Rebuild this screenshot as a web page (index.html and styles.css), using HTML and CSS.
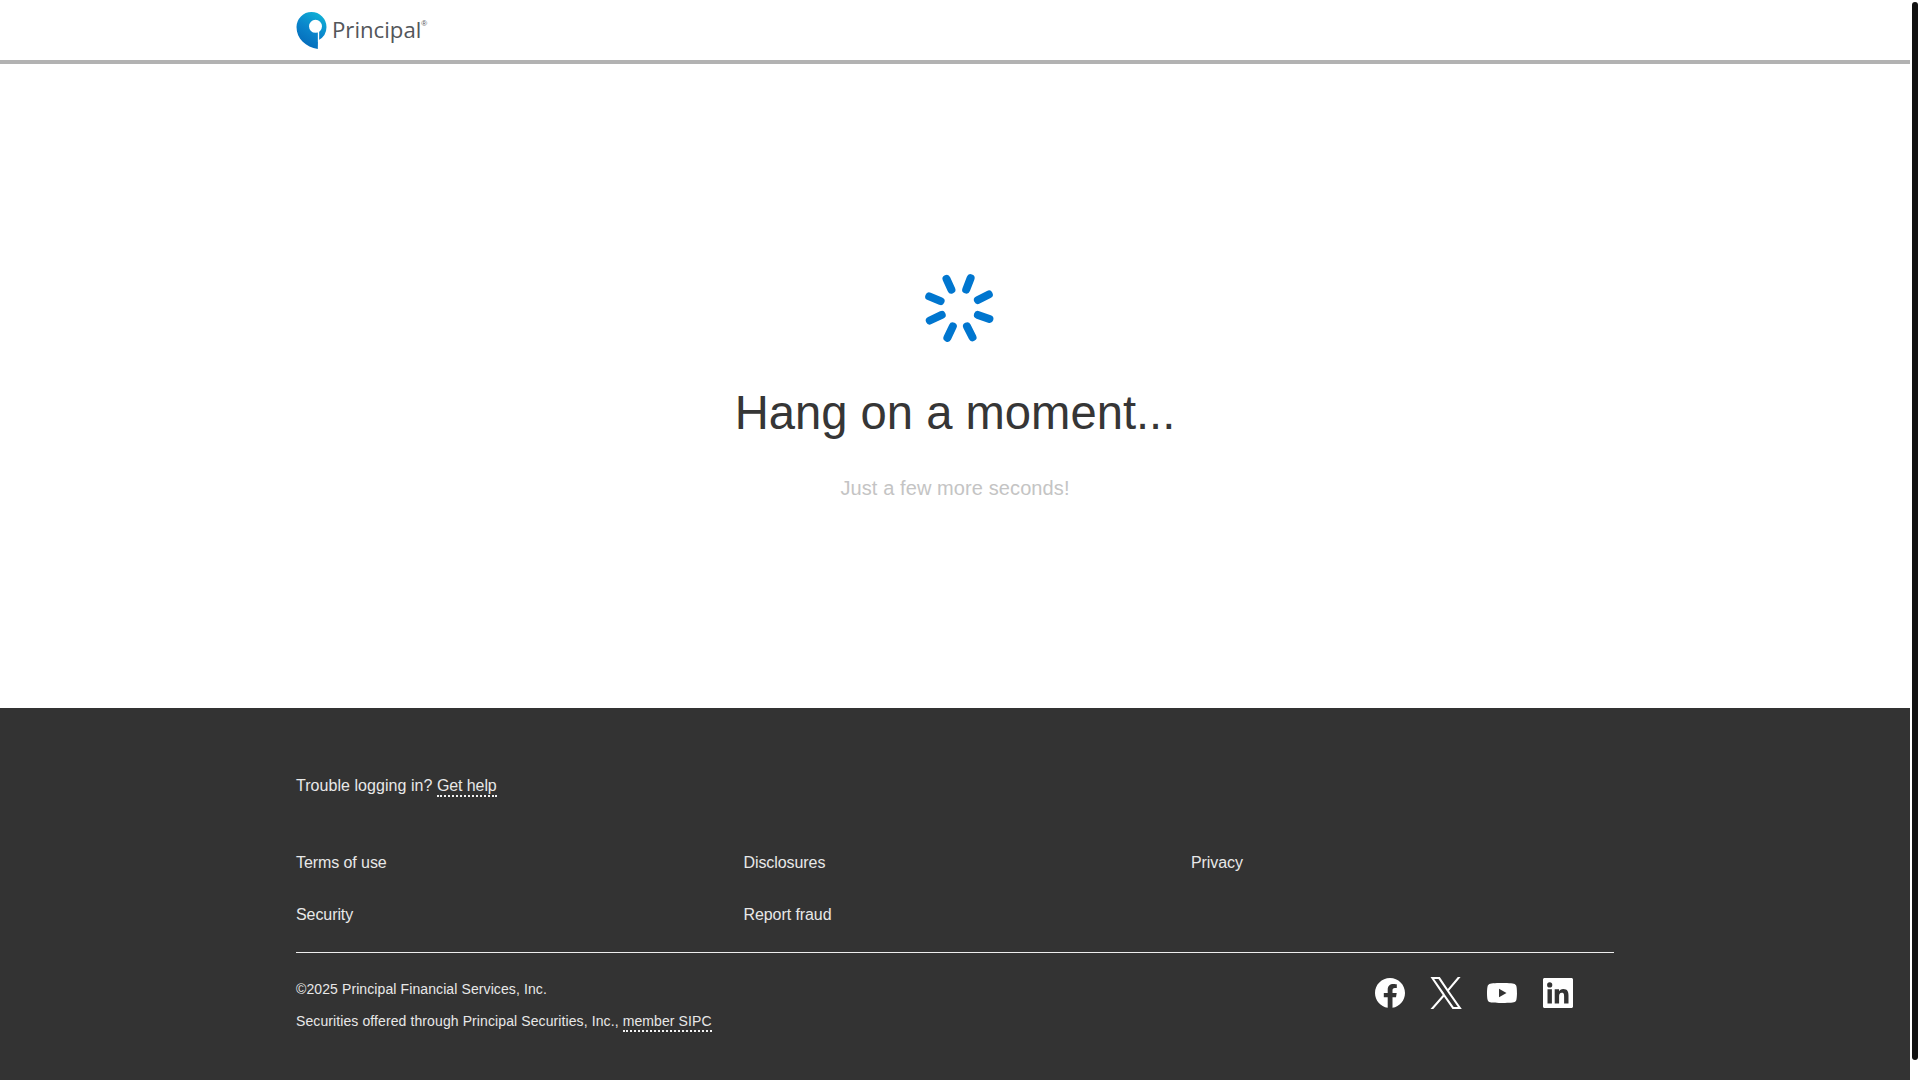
FILE: index.html
```html
<!DOCTYPE html>
<html lang="en">
<head>
<meta charset="utf-8">
<title>Principal</title>
<link rel="stylesheet" href="styles.css">
</head>
<body>
<div class="page">
  <header class="site-header">
    <div class="container">
      <a class="logo" href="#">
        <svg class="logo-mark" viewBox="0 0 32 37" width="32" height="37" aria-hidden="true">
          <defs>
            <linearGradient id="lg" x1="0.8" y1="0" x2="0.3" y2="1">
              <stop offset="0" stop-color="#10b4d6"/>
              <stop offset="0.5" stop-color="#0a86cc"/>
              <stop offset="1" stop-color="#0468b8"/>
            </linearGradient>
          </defs>
          <path fill="url(#lg)" fill-rule="evenodd" d="M15.500 0A15 15 0 0 1 30.500 15 15 15 0 0 1 22 28.500L21.800 37C10 35 .5 27 .5 15A15 15 0 0 1 15.500 0zM19.500 7.800A6.500 6.500 0 1 0 19.500 20.800 6.500 6.500 0 0 0 19.500 7.800z"/>
          <path stroke="#fff" stroke-width="1.300" fill="none" d="M22.500 19V30"/>
        </svg>
        <span class="logo-word">Principal</span><span class="logo-reg">®</span>
      </a>
    </div>
  </header>

  <main class="loading">
    <svg class="spinner" viewBox="-40 -40 80 80" width="80" height="80" aria-hidden="true">
      <g stroke="#0076cf" stroke-width="8" stroke-linecap="round">
        <line x1="-12.500" y1="-29.200" x2="-7.600" y2="-18.400"/>
        <line x1="11.600" y1="-29.800" x2="7.200" y2="-18.400"/>
        <line x1="29.800" y1="-13.500" x2="18.900" y2="-8"/>
        <line x1="30.400" y1="11" x2="18.900" y2="6.900"/>
        <line x1="13.500" y1="29.200" x2="8" y2="18.400"/>
        <line x1="-11.600" y1="29.800" x2="-6.200" y2="18.400"/>
        <line x1="-29.200" y1="12.500" x2="-17.300" y2="6.900"/>
        <line x1="-29.800" y1="-11.600" x2="-18.400" y2="-6.900"/>
      </g>
    </svg>
    <h1 class="loading-title">Hang on a moment...</h1>
    <p class="loading-sub">Just a few more seconds!</p>
  </main>

  <footer class="site-footer">
    <div class="container">
      <p class="trouble">Trouble logging in? <a class="dotted" href="#">Get help</a></p>
      <ul class="links">
        <li><a href="#">Terms of use</a></li>
        <li><a href="#">Disclosures</a></li>
        <li><a href="#">Privacy</a></li>
        <li><a href="#">Security</a></li>
        <li><a href="#">Report fraud</a></li>
      </ul>
      <div class="legal-row">
        <div class="legal">
          <p>©2025 Principal Financial Services, Inc.</p>
          <p>Securities offered through Principal Securities, Inc., <a class="dotted" href="#">member SIPC</a></p>
        </div>
        <div class="social">
          <a href="#" aria-label="Facebook">
            <svg viewBox="0 0 30 30" width="30" height="30"><path fill="#fff" d="M30 15C30 6.700 23.300 0 15 0S0 6.700 0 15c0 7.500 5.500 13.700 12.700 14.800V19.300H8.800V15h3.900v-3.300c0-3.800 2.200-5.800 5.700-5.800 1.600 0 3.400.3 3.400.3v3.700h-1.900c-1.900 0-2.400 1.200-2.400 2.300V15h4.200l-.7 4.300h-3.500v10.500C24.500 28.700 30 22.500 30 15z"/></svg>
          </a>
          <a href="#" aria-label="X">
            <svg viewBox="0 0 32 32" width="32" height="32"><path fill="#fff" fill-rule="evenodd" d="M19 13.700 30.600 0h-2.800L17.800 11.900 9.800 0H.5l12.200 18.100L.5 32h2.800l10.700-12.300L22.500 32h9.300L19 13.700zM15.200 17.900 14 16.100 4.200 2.100h4.300l7.900 11.400 1.200 1.800 10.300 14.700h-4.200l-8.500-12.100z"/></svg>
          </a>
          <a href="#" aria-label="YouTube">
            <svg viewBox="0 0 30 30" width="30" height="30"><path fill="#fff" fill-rule="evenodd" d="M29.400 8.200c-.3-1.300-1.300-2.200-2.600-2.500C24.500 5 15 5 15 5s-9.500 0-11.800.7C1.900 6 .9 6.900.6 8.200 0 10.600 0 15 0 15s0 4.400.6 6.800c.3 1.300 1.300 2.200 2.600 2.500C5.500 25 15 25 15 25s9.500 0 11.800-.7c1.300-.3 2.300-1.200 2.600-2.500.6-2.400.6-6.800.6-6.800s0-4.400-.6-6.800zM12 19.200v-8.400l7.500 4.200-7.500 4.200z"/></svg>
          </a>
          <a href="#" aria-label="LinkedIn">
            <svg viewBox="0 0 30 30" width="30" height="30"><path fill="#fff" fill-rule="evenodd" d="M1.500 0h27C29.300 0 30 .7 30 1.500v27c0 .8-.7 1.500-1.500 1.500h-27C.7 30 0 29.300 0 28.500v-27C0 .7.700 0 1.500 0zM4.500 11.300v14.200h4.400V11.300H4.500zM6.700 4.300a2.600 2.600 0 1 0 0 5.200 2.600 2.600 0 0 0 0-5.200zM11.700 11.300v14.200h4.400v-7c0-1.900.4-3.700 2.700-3.700s2.300 2.100 2.300 3.800v6.900h4.400v-7.800c0-3.800-.8-6.700-5.300-6.700-2.100 0-3.600 1.200-4.100 2.300h-.1v-2H11.700z"/></svg>
          </a>
        </div>
      </div>
    </div>
  </footer>
</div>
<div class="scrollbar" aria-hidden="true"></div>
</body>
</html>
```
FILE: styles.css
```css
html, body {
  margin: 0;
  height: 100%;
  overflow: hidden;
  background: #fff;
}
body {
  font-family: "Liberation Sans", Arial, sans-serif;
  color: #333;
}
a { color: inherit; text-decoration: none; }
p, h1, ul { margin: 0; padding: 0; }

.page {
  width: 1910px;
  height: 1080px;
  display: flex;
  flex-direction: column;
}
.container {
  width: 1318px;
  margin-left: 296px;
}

.site-header {
  height: 60px;
  border-bottom: 4px solid #b2b2b2;
  flex: none;
}
.site-header .container { height: 60px; display: flex; align-items: center; }
.logo { display: flex; align-items: flex-start; color: #53565a; }
.logo-mark { display: block; margin-right: 4px; }
.logo-word {
  font-family: "Open Sans", sans-serif;
  font-size: 22.200px;
  line-height: 32px;
  margin-top: 2px;
}
.logo-reg { font-size: 8px; line-height: 10px; margin-top: 7px; }

.loading {
  flex: 1;
  display: flex;
  flex-direction: column;
  align-items: center;
  text-align: center;
  padding-top: 204px;
}
.spinner { display: block; margin-left: 8px; }
.loading-title {
  font-weight: 400;
  font-size: 47.200px;
  line-height: 56px;
  margin-top: 37px;
  color: #363636;
}
.loading-sub {
  font-size: 20px;
  letter-spacing: .1px;
  line-height: 28px;
  margin-top: 33px;
  color: #c4c4c4;
}

.site-footer {
  height: 372px;
  flex: none;
  background: #333;
  color: #e8e8e8;
}
.trouble {
  font-size: 16px;
  letter-spacing: .05px;
  line-height: 24px;
  padding-top: 66px;
}
.dotted { border-bottom: 2px dotted #f2f2f2; padding-bottom: 1px; }
.trouble .dotted { letter-spacing: -.1px; }
.links {
  list-style: none;
  display: grid;
  grid-template-columns: repeat(3, 447.500px);
  grid-auto-rows: 24px;
  row-gap: 28px;
  margin-top: 53px;
  font-size: 16px;
  letter-spacing: -.08px;
  line-height: 24px;
  padding-bottom: 25px;
  border-bottom: 1px solid #eee;
  width: 1318px;
}
.legal-row {
  display: flex;
  justify-content: space-between;
  padding-top: 24px;
}
.legal { font-size: 14px; letter-spacing: .1px; line-height: 24px; }
.legal p + p { margin-top: 8px; }
.social {
  display: flex;
  align-items: center;
  align-self: flex-start;
  gap: 26px;
  margin-right: 41px;
  height: 32px;
}
.social a { display: block; height: 30px; }
.social svg { display: block; }
.social a:nth-child(2) { height: 32px; width: 32px; margin: 0 -1px; }

.scrollbar {
  position: fixed;
  left: 1912px;
  top: 2px;
  width: 6px;
  height: 1058px;
  background: #111;
  border-radius: 3px;
}
```
